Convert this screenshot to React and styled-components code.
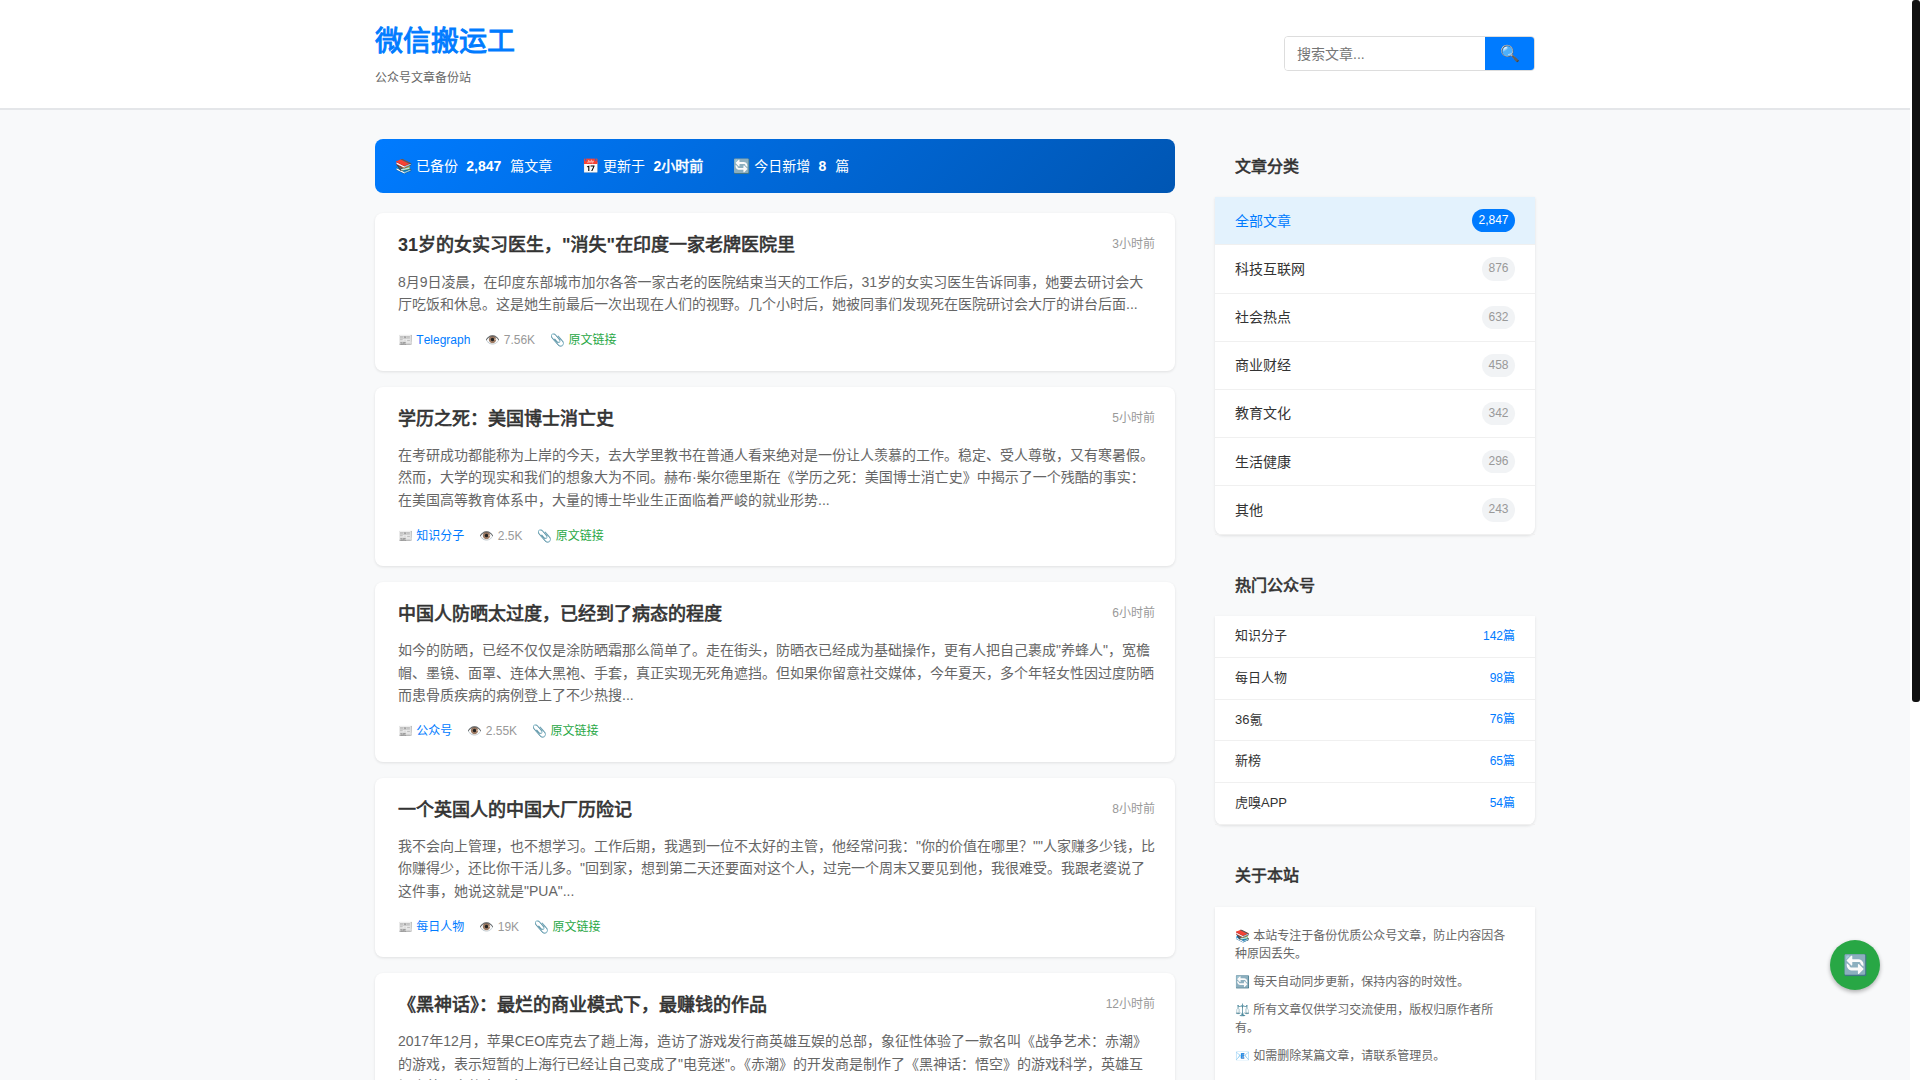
import React from "react";
import styled, { createGlobalStyle } from "styled-components";

const FONT = `"Liberation Sans", "Noto Sans CJK SC", sans-serif`;

const Global = createGlobalStyle`
  * { box-sizing: border-box; margin: 0; padding: 0; }
  html { background: #f8f9fa; }
  body { padding-right: 10px; font-family: ${FONT}; font-size: 14px; line-height: 1.6; color: #333; background: #f8f9fa; }
  a { text-decoration: none; }
`;

const ScrollRail = styled.div`
  position: fixed;
  top: 0;
  right: 0;
  bottom: 0;
  width: 10px;
  background: #fff;
`;
const ScrollThumb = styled.div`
  width: 8px;
  height: 702px;
  margin-left: 2px;
  background: #111;
  border-radius: 3px;
`;
const Header = styled.header`
  background: #fff;
  border-bottom: 2px solid #e4e6e9;
  margin-bottom: 29px;
`;
const HeaderInner = styled.div`
  max-width: 1200px;
  margin: 0 auto;
  padding: 20px;
  display: flex;
  justify-content: space-between;
  align-items: center;
`;
const Logo = styled.h1`
  font-size: 28px;
  font-weight: 400;
  -webkit-text-stroke: 0.96px #007bff;
  color: #007bff;
  line-height: 1.6;
`;
const Tagline = styled.p`
  font-size: 12px;
  color: #666;
  margin-top: 4px;
`;
const Search = styled.form`
  display: flex;
  width: 251px;
  height: 35px;
  border: 1px solid #ddd;
  border-radius: 4px;
  overflow: hidden;
`;
const SearchInput = styled.input`
  flex: 1;
  min-width: 0;
  border: 0;
  outline: 0;
  padding: 0 12px;
  font: 14px ${FONT};
`;
const SearchButton = styled.button`
  width: 49px;
  border: 0;
  background: #007bff;
  color: #fff;
  font: 16px ${FONT};
`;
const Layout = styled.div`
  max-width: 1200px;
  margin: 0 auto;
  padding: 0 20px;
  display: grid;
  grid-template-columns: 1fr 320px;
  gap: 40px;
  align-items: start;
`;
const Banner = styled.div`
  display: flex;
  gap: 30px;
  padding: 16px 20px;
  margin-bottom: 20px;
  color: #fff;
  font-size: 14px;
  border-radius: 8px;
  background: linear-gradient(135deg, #007bff, #0056b3);
`;
const BannerNum = styled.span`
  margin: 0 ${(p) => (p.$last ? "0" : "5px")} 0 4.5px;
  font-weight: 400;
  -webkit-text-stroke: 0.56px #fff;
`;
const Latin = styled.strong`
  font-weight: 700;
  -webkit-text-stroke: 0;
`;
const Card = styled.article`
  background: #fff;
  border-left: 3px solid transparent;
  border-radius: 8px;
  padding: 20px;
  margin-bottom: 16px;
  box-shadow: 0 1px 3px rgba(0, 0, 0, 0.1);
`;
const CardHead = styled.div`
  display: flex;
  justify-content: space-between;
  align-items: center;
  gap: 15px;
  margin-bottom: 12px;
`;
const CardTitle = styled.h2`
  font-size: 18px;
  font-weight: 400;
  line-height: 1.4;
  -webkit-text-stroke: 0.69px #333;
  color: #333;
`;
const CardTime = styled.span`
  font-size: 12px;
  color: #999;
  white-space: nowrap;
  margin-bottom: 2px;
`;
const Excerpt = styled.p`
  font-size: 14px;
  color: #666;
  margin-bottom: 16px;
`;
const Meta = styled.div`
  display: flex;
  gap: 15px;
  font-size: 12px;
  color: #999;
`;
const Source = styled.a`
  color: #999;
`;
const Blue = styled.span`
  color: #007bff;
  font-kerning: none;
`;
const Green = styled.span`
  color: #28a745;
`;
const Side = styled.aside`
  display: flex;
  flex-direction: column;
  gap: 23.2px;
`;
const PanelTitle = styled.h3`
  font-size: 16px;
  font-weight: 400;
  -webkit-text-stroke: 0.62px #333;
  color: #333;
  padding: 15px 20px 17.7px;
`;
const PanelBody = styled.div`
  background: #fff;
  border-radius: 0 0 8px 8px;
  box-shadow: 0 1px 3px rgba(0, 0, 0, 0.1);
`;
const CatRow = styled.div`
  display: flex;
  justify-content: space-between;
  align-items: center;
  padding: 12px 20px;
  border-bottom: 1px solid #f0f0f0;
  font-size: 14px;
  color: ${(p) => (p.$active ? "#007bff" : "#333")};
  background: ${(p) => (p.$active ? "#e3f2fd" : "transparent")};
`;
const Badge = styled.span`
  font-size: 12px;
  padding: 2px 6.5px;
  border-radius: 12px;
  color: ${(p) => (p.$active ? "#fff" : "#999")};
  background: ${(p) => (p.$active ? "#007bff" : "#f1f3f5")};
`;
const AccRow = styled.div`
  display: flex;
  justify-content: space-between;
  align-items: center;
  padding: 10px 20px;
  border-bottom: 1px solid #f0f0f0;
  font-size: 13px;
  color: #333;
`;
const AccCount = styled.span`
  font-size: 12px;
  color: #007bff;
`;
const About = styled.div`
  padding: 20px;
  font-size: 12px;
  line-height: 1.5;
  color: #666;
`;
const AboutLine = styled.p`
  margin-bottom: 10px;
`;
const Footer = styled.footer`
  text-align: center;
  padding: 20px;
  font-size: 12px;
  color: #999;
`;
const Fab = styled.button`
  position: fixed;
  right: 40px;
  bottom: 90px;
  width: 50px;
  height: 50px;
  border: 0;
  border-radius: 50%;
  background: #28a745;
  font: 20px ${FONT};
  color: #fff;
  box-shadow: 0 2px 4px rgba(0, 0, 0, 0.3);
`;

const articles = [
  { t: '31岁的女实习医生，"消失"在印度一家老牌医院里', time: "3小时前", e: "8月9日凌晨，在印度东部城市加尔各答一家古老的医院结束当天的工作后，31岁的女实习医生告诉同事，她要去研讨会大厅吃饭和休息。这是她生前最后一次出现在人们的视野。几个小时后，她被同事们发现死在医院研讨会大厅的讲台后面...", s: "Telegraph", v: "7.56K" },
  { t: "学历之死：美国博士消亡史", time: "5小时前", e: "在考研成功都能称为上岸的今天，去大学里教书在普通人看来绝对是一份让人羡慕的工作。稳定、受人尊敬，又有寒暑假。然而，大学的现实和我们的想象大为不同。赫布·柴尔德里斯在《学历之死：美国博士消亡史》中揭示了一个残酷的事实：在美国高等教育体系中，大量的博士毕业生正面临着严峻的就业形势...", s: "知识分子", v: "2.5K" },
  { t: "中国人防晒太过度，已经到了病态的程度", time: "6小时前", e: '如今的防晒，已经不仅仅是涂防晒霜那么简单了。走在街头，防晒衣已经成为基础操作，更有人把自己裹成"养蜂人"，宽檐帽、墨镜、面罩、连体大黑袍、手套，真正实现无死角遮挡。但如果你留意社交媒体，今年夏天，多个年轻女性因过度防晒而患骨质疾病的病例登上了不少热搜...', s: "公众号", v: "2.55K" },
  { t: "一个英国人的中国大厂历险记", time: "8小时前", e: '我不会向上管理，也不想学习。工作后期，我遇到一位不太好的主管，他经常问我："你的价值在哪里？""人家赚多少钱，比你赚得少，还比你干活儿多。"回到家，想到第二天还要面对这个人，过完一个周末又要见到他，我很难受。我跟老婆说了这件事，她说这就是"PUA"...', s: "每日人物", v: "19K" },
  { t: "《黑神话》：最烂的商业模式下，最赚钱的作品", time: "12小时前", e: '2017年12月，苹果CEO库克去了趟上海，造访了游戏发行商英雄互娱的总部，象征性体验了一款名叫《战争艺术：赤潮》的游戏，表示短暂的上海行已经让自己变成了"电竞迷"。《赤潮》的开发商是制作了《黑神话：悟空》的游戏科学，英雄互娱也曾是它的大股东...', s: "虎嗅APP", v: "8.2K" },
  { t: "当代年轻人，正在逃离大城市", time: "14小时前", e: "越来越多的年轻人开始重新思考自己的生活方式，离开一线城市回到家乡，或者选择一座节奏更慢的小城。房租、通勤和加班，正在改变他们对于成功的定义，而小城的生活也并不总是想象中那样轻松...", s: "新榜", v: "6.1K" },
  { t: "36氪首发：一家新能源公司的融资故事", time: "16小时前", e: "在资本趋于谨慎的当下，这家成立不足三年的公司却连续完成了两轮融资。创始人表示，新一轮资金将主要用于产线建设和海外市场拓展，公司计划在明年实现规模化量产，并进一步降低电池的制造成本...", s: "36氪", v: "4.3K" },
];
const cats = [["全部文章", "2,847"], ["科技互联网", "876"], ["社会热点", "632"], ["商业财经", "458"], ["教育文化", "342"], ["生活健康", "296"], ["其他", "243"]];
const accs = [["知识分子", "142篇"], ["每日人物", "98篇"], ["36氪", "76篇"], ["新榜", "65篇"], ["虎嗅APP", "54篇"]];
const about = ["📚 本站专注于备份优质公众号文章，防止内容因各种原因丢失。", "🔄 每天自动同步更新，保持内容的时效性。", "⚖️ 所有文章仅供学习交流使用，版权归原作者所有。", "📧 如需删除某篇文章，请联系管理员。"];

// ASCII runs are true bold; Han runs keep the regular face with a thin outline.
const boldRuns = (text) =>
  text.split(/([\x00-\x7f]+)/).map((part, i) =>
    i % 2 ? <Latin key={i}>{part}</Latin> : part
  );

export default function App() {
  return (
    <>
      <Global />
      <Header>
        <HeaderInner>
          <div>
            <Logo>微信搬运工</Logo>
            <Tagline>公众号文章备份站</Tagline>
          </div>
          <Search onSubmit={(e) => e.preventDefault()}>
            <SearchInput placeholder="搜索文章..." />
            <SearchButton>🔍</SearchButton>
          </Search>
        </HeaderInner>
      </Header>
      <Layout>
        <main>
          <Banner>
            <span>📚 已备份 <BannerNum>{boldRuns("2,847")}</BannerNum> 篇文章</span>
            <span>📅 更新于 <BannerNum $last>{boldRuns("2小时前")}</BannerNum></span>
            <span>🔄 今日新增 <BannerNum>{boldRuns("8")}</BannerNum> 篇</span>
          </Banner>
          {articles.map((a) => (
            <Card key={a.t}>
              <CardHead>
                <CardTitle>{boldRuns(a.t)}</CardTitle>
                <CardTime>{a.time}</CardTime>
              </CardHead>
              <Excerpt>{a.e}</Excerpt>
              <Meta>
                <Source>📰 <Blue>{a.s}</Blue></Source>
                <span>👁️ {a.v}</span>
                <span>📎 <Green>原文链接</Green></span>
              </Meta>
            </Card>
          ))}
        </main>
        <Side>
          <div>
            <PanelTitle>文章分类</PanelTitle>
            <PanelBody>
              {cats.map(([n, c], i) => (
                <CatRow key={n} $active={i === 0}>
                  <span>{n}</span>
                  <Badge $active={i === 0}>{c}</Badge>
                </CatRow>
              ))}
            </PanelBody>
          </div>
          <div>
            <PanelTitle>热门公众号</PanelTitle>
            <PanelBody>
              {accs.map(([n, c]) => (
                <AccRow key={n}>
                  <span>{n}</span>
                  <AccCount>{c}</AccCount>
                </AccRow>
              ))}
            </PanelBody>
          </div>
          <div>
            <PanelTitle>关于本站</PanelTitle>
            <PanelBody>
              <About>
                {about.map((l) => (
                  <AboutLine key={l}>{l}</AboutLine>
                ))}
              </About>
            </PanelBody>
          </div>
        </Side>
      </Layout>
      <Footer>© 2024 微信搬运工 · 公众号文章备份站</Footer>
      <ScrollRail>
        <ScrollThumb />
      </ScrollRail>
      <Fab>🔄</Fab>
    </>
  );
}
